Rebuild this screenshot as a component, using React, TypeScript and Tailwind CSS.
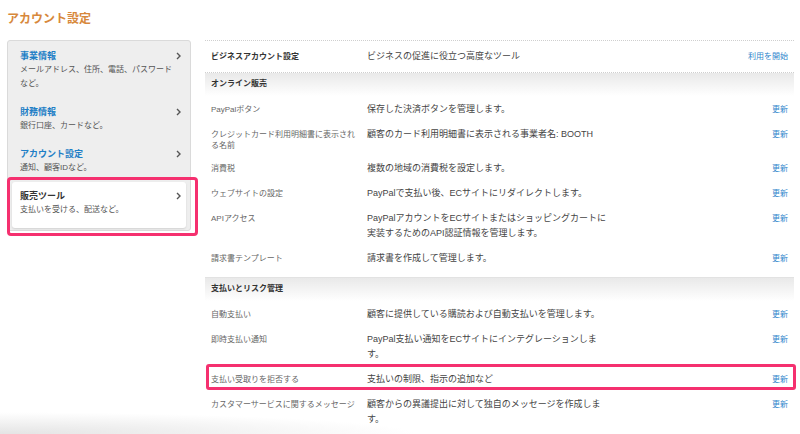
import React from 'react'

type Row = { label: string[]; desc: string[]; link?: string; last?: boolean }

const online: Row[] = [
  { label: ['PayPalボタン'], desc: ['保存した決済ボタンを管理します。'] },
  { label: ['クレジットカード利用明細書に表示され', 'る名前'], desc: ['顧客のカード利用明細書に表示される事業者名: BOOTH'] },
  { label: ['消費税'], desc: ['複数の地域の消費税を設定します。'] },
  { label: ['ウェブサイトの設定'], desc: ['PayPalで支払い後、ECサイトにリダイレクトします。'] },
  { label: ['APIアクセス'], desc: ['PayPalアカウントをECサイトまたはショッピングカートに', '実装するためのAPI認証情報を管理します。'] },
  { label: ['請求書テンプレート'], desc: ['請求書を作成して管理します。'], last: true },
]

const risk: Row[] = [
  { label: ['自動支払い'], desc: ['顧客に提供している購読および自動支払いを管理します。'] },
  { label: ['即時支払い通知'], desc: ['PayPal支払い通知をECサイトにインテグレーションしま', 'す。'] },
  { label: ['支払い受取りを拒否する'], desc: ['支払いの制限、指示の追加など'] },
  { label: ['カスタマーサービスに関するメッセージ'], desc: ['顧客からの異議提出に対して独自のメッセージを作成しま', 'す。'], last: true },
]

const menu = [
  { title: '事業情報', desc: ['メールアドレス、住所、電話、パスワード', 'など。'] },
  { title: '財務情報', desc: ['銀行口座、カードなど。'] },
  { title: 'アカウント設定', desc: ['通知、顧客IDなど。'] },
]

const Chevron = () => (
  <svg width="5" height="8" viewBox="0 0 5 8" className="mt-[3px] shrink-0">
    <path d="M1 1l3 3-3 3" fill="none" stroke="#555" strokeWidth="1.4" />
  </svg>
)

const SettingRow = ({ row }: { row: Row }) => (
  <div className={`flex pl-[6px] pr-[6px] pt-[6px] ${row.last ? 'pb-[11px]' : 'pb-[4px]'}`}>
    <div className="w-[156px] shrink-0 pt-[2px] text-[8px] leading-[11px] text-[#666]">
      {row.label.map((l) => (
        <div key={l} className="whitespace-nowrap">{l}</div>
      ))}
    </div>
    <div className="flex-1 text-[9px] leading-[15px] text-[#444]">
      {row.desc.map((d) => (
        <div key={d} className="whitespace-nowrap">{d}</div>
      ))}
    </div>
    <span className="text-[8px] leading-[15px] text-[#2f86cc]">{row.link ?? '更新'}</span>
  </div>
)

const SectionHeader = ({ title }: { title: string }) => (
  <div className="h-[23px] bg-linear-to-b from-[#e9e9e9] to-white pl-[6px] pt-[4px] text-[8px] font-bold leading-[14px] text-[#333]">
    {title}
  </div>
)

export default function App() {
  return (
    <div
      className="relative h-[434px] w-[800px] overflow-hidden bg-white"
      style={{ fontFamily: '"Liberation Sans", "Noto Sans CJK JP", sans-serif' }}
    >
      <h1 className="pl-[7px] pt-[11px] text-[12px] font-bold leading-[16px] text-[#d7883b]">アカウント設定</h1>

      <div className="mt-[13px] flex">
        {/* Sidebar */}
        <div className="ml-[7px] h-[191px] w-[184px] shrink-0 rounded-[3px] border border-[#dadada] bg-[#eeeeee] pt-[1px]">
          {menu.map((m) => (
            <div key={m.title} className="flex justify-between py-[7px] pl-[12px] pr-[9px]">
              <div>
                <div className="text-[9px] font-bold leading-[14px] text-[#1f7fc6]">{m.title}</div>
                {m.desc.map((d) => (
                  <div key={d} className="text-[8px] leading-[14px] text-[#555]">{d}</div>
                ))}
              </div>
              <Chevron />
            </div>
          ))}
          <div className="mx-[4px] flex justify-between rounded-[3px] bg-white pb-[11px] pl-[8px] pr-[5px] pt-[7px] shadow-[0_1px_2px_rgba(0,0,0,0.12)]">
            <div>
              <div className="text-[9px] font-bold leading-[14px] text-[#333]">販売ツール</div>
              <div className="text-[8px] leading-[14px] text-[#555]">支払いを受ける、配送など。</div>
            </div>
            <Chevron />
          </div>
        </div>

        {/* Settings table */}
        <div className="ml-[14px] w-[589px]">
          <div className="flex border-y border-dotted border-[#cfcfcf] pl-[6px] pr-[6px] pb-[8px] pt-[8px]">
            <div className="w-[156px] shrink-0 pt-[1px] text-[8px] font-bold leading-[14px] text-[#333]">ビジネスアカウント設定</div>
            <div className="flex-1 text-[9px] leading-[15px] text-[#444]">ビジネスの促進に役立つ高度なツール</div>
            <span className="text-[8px] leading-[15px] text-[#2f86cc]">利用を開始</span>
          </div>
          <SectionHeader title="オンライン販売" />
          {online.map((r) => (
            <SettingRow key={r.label[0]} row={r} />
          ))}
          <div className="border-t border-[#e2e2e2]" />
          <SectionHeader title="支払いとリスク管理" />
          {risk.map((r) => (
            <SettingRow key={r.label[0]} row={r} />
          ))}
          <div className="border-t border-[#e2e2e2]" />
        </div>
      </div>

      {/* Highlight annotations */}
      <div className="pointer-events-none absolute left-[7px] top-[177px] h-[59px] w-[191px] rounded-[4px] border-[3px] border-[#f5306f]" />
      <div className="pointer-events-none absolute left-[206px] top-[364px] h-[26px] w-[590px] rounded-[3px] border-[3px] border-[#f5306f]" />

      {/* soft shadow at bottom */}
      <div className="pointer-events-none absolute bottom-0 left-0 h-[22px] w-[420px] bg-[radial-gradient(ellipse_at_bottom_left,#e4e4e4,rgba(255,255,255,0)_70%)]" />
    </div>
  )
}
